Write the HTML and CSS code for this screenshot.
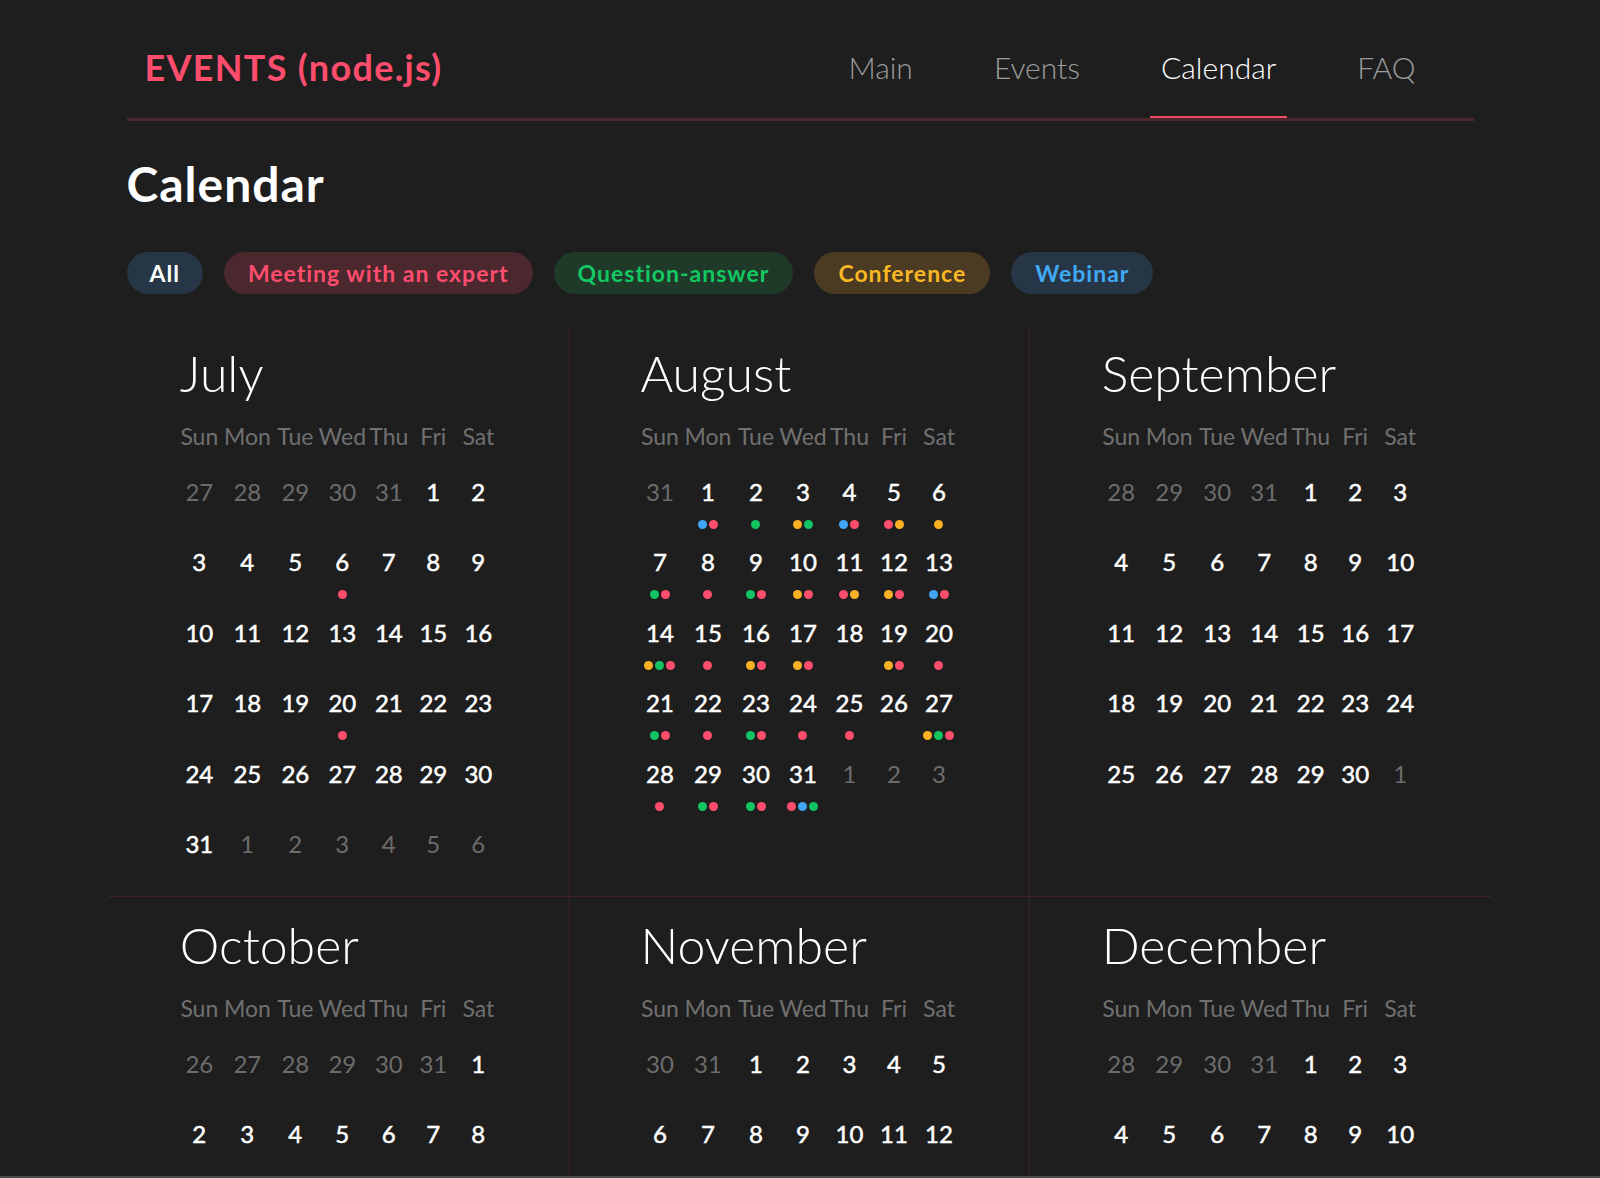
FILE: index.html
```html
<!DOCTYPE html>
<html lang="en">
<head>
<meta charset="utf-8">
<title>EVENTS (node.js) — Calendar</title>
<link rel="stylesheet" href="styles.css">
</head>
<body>
<div class="page">
  <header class="header">
    <a class="logo" href="#">EVENTS (node.js)</a>
    <nav class="nav">
      <a class="nav-link" href="#">Main</a>
      <a class="nav-link" href="#">Events</a>
      <a class="nav-link active" href="#">Calendar</a>
      <a class="nav-link" href="#">FAQ</a>
    </nav>
  </header>

  <h1 class="title">Calendar</h1>

  <div class="filters">
    <button class="pill pill-all">All</button>
    <button class="pill pill-red">Meeting with an expert</button>
    <button class="pill pill-green">Question-answer</button>
    <button class="pill pill-yellow">Conference</button>
    <button class="pill pill-blue">Webinar</button>
  </div>

  <section class="months">
    <!-- July -->
    <div class="cell top">
      <div class="month">
        <h2 class="month-name">July</h2>
        <div class="week"><span>Sun</span><span>Mon</span><span>Tue</span><span>Wed</span><span>Thu</span><span>Fri</span><span>Sat</span></div>
        <div class="days">
          <div class="day muted"><span class="num">27</span></div><div class="day muted"><span class="num">28</span></div><div class="day muted"><span class="num">29</span></div><div class="day muted"><span class="num">30</span></div><div class="day muted"><span class="num">31</span></div><div class="day"><span class="num">1</span></div><div class="day"><span class="num">2</span></div>
          <div class="day"><span class="num">3</span></div><div class="day"><span class="num">4</span></div><div class="day"><span class="num">5</span></div><div class="day"><span class="num">6</span><span class="dots"><i class="dot red"></i></span></div><div class="day"><span class="num">7</span></div><div class="day"><span class="num">8</span></div><div class="day"><span class="num">9</span></div>
          <div class="day"><span class="num">10</span></div><div class="day"><span class="num">11</span></div><div class="day"><span class="num">12</span></div><div class="day"><span class="num">13</span></div><div class="day"><span class="num">14</span></div><div class="day"><span class="num">15</span></div><div class="day"><span class="num">16</span></div>
          <div class="day"><span class="num">17</span></div><div class="day"><span class="num">18</span></div><div class="day"><span class="num">19</span></div><div class="day"><span class="num">20</span><span class="dots"><i class="dot red"></i></span></div><div class="day"><span class="num">21</span></div><div class="day"><span class="num">22</span></div><div class="day"><span class="num">23</span></div>
          <div class="day"><span class="num">24</span></div><div class="day"><span class="num">25</span></div><div class="day"><span class="num">26</span></div><div class="day"><span class="num">27</span></div><div class="day"><span class="num">28</span></div><div class="day"><span class="num">29</span></div><div class="day"><span class="num">30</span></div>
          <div class="day"><span class="num">31</span></div><div class="day muted"><span class="num">1</span></div><div class="day muted"><span class="num">2</span></div><div class="day muted"><span class="num">3</span></div><div class="day muted"><span class="num">4</span></div><div class="day muted"><span class="num">5</span></div><div class="day muted"><span class="num">6</span></div>
        </div>
      </div>
    </div>

    <!-- August -->
    <div class="cell top">
      <div class="month">
        <h2 class="month-name">August</h2>
        <div class="week"><span>Sun</span><span>Mon</span><span>Tue</span><span>Wed</span><span>Thu</span><span>Fri</span><span>Sat</span></div>
        <div class="days">
          <div class="day muted"><span class="num">31</span></div>
          <div class="day"><span class="num">1</span><span class="dots"><i class="dot blue"></i><i class="dot red"></i></span></div>
          <div class="day"><span class="num">2</span><span class="dots"><i class="dot green"></i></span></div>
          <div class="day"><span class="num">3</span><span class="dots"><i class="dot yellow"></i><i class="dot green"></i></span></div>
          <div class="day"><span class="num">4</span><span class="dots"><i class="dot blue"></i><i class="dot red"></i></span></div>
          <div class="day"><span class="num">5</span><span class="dots"><i class="dot red"></i><i class="dot yellow"></i></span></div>
          <div class="day"><span class="num">6</span><span class="dots"><i class="dot yellow"></i></span></div>

          <div class="day"><span class="num">7</span><span class="dots"><i class="dot green"></i><i class="dot red"></i></span></div>
          <div class="day"><span class="num">8</span><span class="dots"><i class="dot red"></i></span></div>
          <div class="day"><span class="num">9</span><span class="dots"><i class="dot green"></i><i class="dot red"></i></span></div>
          <div class="day"><span class="num">10</span><span class="dots"><i class="dot yellow"></i><i class="dot red"></i></span></div>
          <div class="day"><span class="num">11</span><span class="dots"><i class="dot red"></i><i class="dot yellow"></i></span></div>
          <div class="day"><span class="num">12</span><span class="dots"><i class="dot yellow"></i><i class="dot red"></i></span></div>
          <div class="day"><span class="num">13</span><span class="dots"><i class="dot blue"></i><i class="dot red"></i></span></div>

          <div class="day"><span class="num">14</span><span class="dots"><i class="dot yellow"></i><i class="dot green"></i><i class="dot red"></i></span></div>
          <div class="day"><span class="num">15</span><span class="dots"><i class="dot red"></i></span></div>
          <div class="day"><span class="num">16</span><span class="dots"><i class="dot yellow"></i><i class="dot red"></i></span></div>
          <div class="day"><span class="num">17</span><span class="dots"><i class="dot yellow"></i><i class="dot red"></i></span></div>
          <div class="day"><span class="num">18</span></div>
          <div class="day"><span class="num">19</span><span class="dots"><i class="dot yellow"></i><i class="dot red"></i></span></div>
          <div class="day"><span class="num">20</span><span class="dots"><i class="dot red"></i></span></div>

          <div class="day"><span class="num">21</span><span class="dots"><i class="dot green"></i><i class="dot red"></i></span></div>
          <div class="day"><span class="num">22</span><span class="dots"><i class="dot red"></i></span></div>
          <div class="day"><span class="num">23</span><span class="dots"><i class="dot green"></i><i class="dot red"></i></span></div>
          <div class="day"><span class="num">24</span><span class="dots"><i class="dot red"></i></span></div>
          <div class="day"><span class="num">25</span><span class="dots"><i class="dot red"></i></span></div>
          <div class="day"><span class="num">26</span></div>
          <div class="day"><span class="num">27</span><span class="dots"><i class="dot yellow"></i><i class="dot green"></i><i class="dot red"></i></span></div>

          <div class="day"><span class="num">28</span><span class="dots"><i class="dot red"></i></span></div>
          <div class="day"><span class="num">29</span><span class="dots"><i class="dot green"></i><i class="dot red"></i></span></div>
          <div class="day"><span class="num">30</span><span class="dots"><i class="dot green"></i><i class="dot red"></i></span></div>
          <div class="day"><span class="num">31</span><span class="dots"><i class="dot red"></i><i class="dot blue"></i><i class="dot green"></i></span></div>
          <div class="day muted"><span class="num">1</span></div>
          <div class="day muted"><span class="num">2</span></div>
          <div class="day muted"><span class="num">3</span></div>
        </div>
      </div>
    </div>

    <!-- September -->
    <div class="cell top last">
      <div class="month">
        <h2 class="month-name">September</h2>
        <div class="week"><span>Sun</span><span>Mon</span><span>Tue</span><span>Wed</span><span>Thu</span><span>Fri</span><span>Sat</span></div>
        <div class="days">
          <div class="day muted"><span class="num">28</span></div><div class="day muted"><span class="num">29</span></div><div class="day muted"><span class="num">30</span></div><div class="day muted"><span class="num">31</span></div><div class="day"><span class="num">1</span></div><div class="day"><span class="num">2</span></div><div class="day"><span class="num">3</span></div>
          <div class="day"><span class="num">4</span></div><div class="day"><span class="num">5</span></div><div class="day"><span class="num">6</span></div><div class="day"><span class="num">7</span></div><div class="day"><span class="num">8</span></div><div class="day"><span class="num">9</span></div><div class="day"><span class="num">10</span></div>
          <div class="day"><span class="num">11</span></div><div class="day"><span class="num">12</span></div><div class="day"><span class="num">13</span></div><div class="day"><span class="num">14</span></div><div class="day"><span class="num">15</span></div><div class="day"><span class="num">16</span></div><div class="day"><span class="num">17</span></div>
          <div class="day"><span class="num">18</span></div><div class="day"><span class="num">19</span></div><div class="day"><span class="num">20</span></div><div class="day"><span class="num">21</span></div><div class="day"><span class="num">22</span></div><div class="day"><span class="num">23</span></div><div class="day"><span class="num">24</span></div>
          <div class="day"><span class="num">25</span></div><div class="day"><span class="num">26</span></div><div class="day"><span class="num">27</span></div><div class="day"><span class="num">28</span></div><div class="day"><span class="num">29</span></div><div class="day"><span class="num">30</span></div><div class="day muted"><span class="num">1</span></div>
        </div>
      </div>
    </div>

    <!-- October -->
    <div class="cell">
      <div class="month">
        <h2 class="month-name">October</h2>
        <div class="week"><span>Sun</span><span>Mon</span><span>Tue</span><span>Wed</span><span>Thu</span><span>Fri</span><span>Sat</span></div>
        <div class="days">
          <div class="day muted"><span class="num">26</span></div><div class="day muted"><span class="num">27</span></div><div class="day muted"><span class="num">28</span></div><div class="day muted"><span class="num">29</span></div><div class="day muted"><span class="num">30</span></div><div class="day muted"><span class="num">31</span></div><div class="day"><span class="num">1</span></div>
          <div class="day"><span class="num">2</span></div><div class="day"><span class="num">3</span></div><div class="day"><span class="num">4</span></div><div class="day"><span class="num">5</span></div><div class="day"><span class="num">6</span></div><div class="day"><span class="num">7</span></div><div class="day"><span class="num">8</span></div>
          <div class="day"><span class="num">9</span></div><div class="day"><span class="num">10</span></div><div class="day"><span class="num">11</span></div><div class="day"><span class="num">12</span></div><div class="day"><span class="num">13</span></div><div class="day"><span class="num">14</span></div><div class="day"><span class="num">15</span></div>
        </div>
      </div>
    </div>

    <!-- November -->
    <div class="cell">
      <div class="month">
        <h2 class="month-name">November</h2>
        <div class="week"><span>Sun</span><span>Mon</span><span>Tue</span><span>Wed</span><span>Thu</span><span>Fri</span><span>Sat</span></div>
        <div class="days">
          <div class="day muted"><span class="num">30</span></div><div class="day muted"><span class="num">31</span></div><div class="day"><span class="num">1</span></div><div class="day"><span class="num">2</span></div><div class="day"><span class="num">3</span></div><div class="day"><span class="num">4</span></div><div class="day"><span class="num">5</span></div>
          <div class="day"><span class="num">6</span></div><div class="day"><span class="num">7</span></div><div class="day"><span class="num">8</span></div><div class="day"><span class="num">9</span></div><div class="day"><span class="num">10</span></div><div class="day"><span class="num">11</span></div><div class="day"><span class="num">12</span></div>
          <div class="day"><span class="num">13</span></div><div class="day"><span class="num">14</span></div><div class="day"><span class="num">15</span></div><div class="day"><span class="num">16</span></div><div class="day"><span class="num">17</span></div><div class="day"><span class="num">18</span></div><div class="day"><span class="num">19</span></div>
        </div>
      </div>
    </div>

    <!-- December -->
    <div class="cell last">
      <div class="month">
        <h2 class="month-name">December</h2>
        <div class="week"><span>Sun</span><span>Mon</span><span>Tue</span><span>Wed</span><span>Thu</span><span>Fri</span><span>Sat</span></div>
        <div class="days">
          <div class="day muted"><span class="num">28</span></div><div class="day muted"><span class="num">29</span></div><div class="day muted"><span class="num">30</span></div><div class="day muted"><span class="num">31</span></div><div class="day"><span class="num">1</span></div><div class="day"><span class="num">2</span></div><div class="day"><span class="num">3</span></div>
          <div class="day"><span class="num">4</span></div><div class="day"><span class="num">5</span></div><div class="day"><span class="num">6</span></div><div class="day"><span class="num">7</span></div><div class="day"><span class="num">8</span></div><div class="day"><span class="num">9</span></div><div class="day"><span class="num">10</span></div>
          <div class="day"><span class="num">11</span></div><div class="day"><span class="num">12</span></div><div class="day"><span class="num">13</span></div><div class="day"><span class="num">14</span></div><div class="day"><span class="num">15</span></div><div class="day"><span class="num">16</span></div><div class="day"><span class="num">17</span></div>
        </div>
      </div>
    </div>
  </section>
</div>
<div class="window-edge"></div>
</body>
</html>
```

FILE: styles.css
```css
* { box-sizing: border-box; }

html, body {
  margin: 0;
  padding: 0;
  background: #1e1e1e;
  color: #ffffff;
  font-family: "Lato", "Open Sans", sans-serif;
}

.page {
  width: 1347px;
  margin: 0 auto;
}

/* Header */
.header {
  display: flex;
  justify-content: space-between;
  align-items: stretch;
  height: 121px;
  border-bottom: 3px solid #4b272e;
}

.logo {
  display: flex;
  align-items: center;
  padding: 16px 0 0 18px;
  color: #ff4d6d;
  font-size: 36px;
  font-weight: 700;
  text-decoration: none;
  letter-spacing: 1.3px;
}

.nav {
  display: flex;
  gap: 59px;
  padding-right: 47px;
}

.nav-link {
  display: flex;
  align-items: center;
  padding: 18px 11px 0;
  border-bottom: 2px solid transparent;
  color: #9c9c9c;
  font-size: 30px;
  font-weight: 300;
  text-decoration: none;
}

.nav-link.active {
  color: #ffffff;
  border-bottom-color: #ef4c68;
}

/* Title */
.title {
  margin: 40px 0 0;
  font-size: 48px;
  line-height: 46px;
  font-weight: 700;
  letter-spacing: 1px;
}

/* Filters */
.filters {
  display: flex;
  gap: 21px;
  margin-top: 45px;
}

.pill {
  height: 42px;
  padding: 0 24px;
  border: 0;
  border-radius: 21px;
  font-family: inherit;
  font-size: 23px;
  font-weight: 700;
  line-height: 42px;
  letter-spacing: 1px;
  cursor: pointer;
}

.pill-all { background: #263646; color: #ffffff; padding: 0 23px; }
.pill-red { background: #4b272e; color: #ff4d6d; }
.pill-green { background: #1f3a29; color: #13c863; }
.pill-yellow { background: #4a3b22; color: #fbb724; }
.pill-blue { background: #263646; color: #41a9f5; }

/* Months grid */
.months {
  display: grid;
  grid-template-columns: repeat(3, 1fr);
  margin: 31px -17.5px 0;
}

.cell {
  padding: 23px 0 15px;
  border-right: 1px solid #3e242a;
}

.cell.top { border-bottom: 1px solid #3e242a; }
.cell.last { border-right: 0; }

.month {
  width: 324px;
  margin: 0 auto;
}

.month-name {
  margin: 0 0 0 3px;
  font-size: 50px;
  line-height: 50px;
  font-weight: 300;
}

.week,
.days {
  display: grid;
  grid-template-columns: 45px 51px 45px 49px 44px 45px 45px;
}

.week {
  margin-top: 23px;
  color: #707070;
  font-size: 23px;
  line-height: 30px;
  text-align: center;
}

.days {
  margin-top: 26px;
  row-gap: 18.4px;
}

.day {
  display: flex;
  flex-direction: column;
  align-items: center;
  height: 52px;
}

.num {
  font-size: 24px;
  line-height: 30px;
  font-weight: 400;
  color: #ffffff;
  -webkit-text-stroke: 0.5px #ffffff;
}

.day.muted .num {
  color: #6c6c6c;
  -webkit-text-stroke: 0;
}

.dots {
  display: flex;
  gap: 2px;
  margin-top: 13px;
}

.dot {
  width: 9px;
  height: 9px;
  border-radius: 50%;
}

.dot.red { background: #ff4d6d; }
.dot.green { background: #12c462; }
.dot.yellow { background: #fbb124; }
.dot.blue { background: #42a5f5; }

.window-edge {
  position: fixed;
  left: 0;
  right: 0;
  bottom: 0;
  height: 2px;
  background: #4c4c4c;
}
```
